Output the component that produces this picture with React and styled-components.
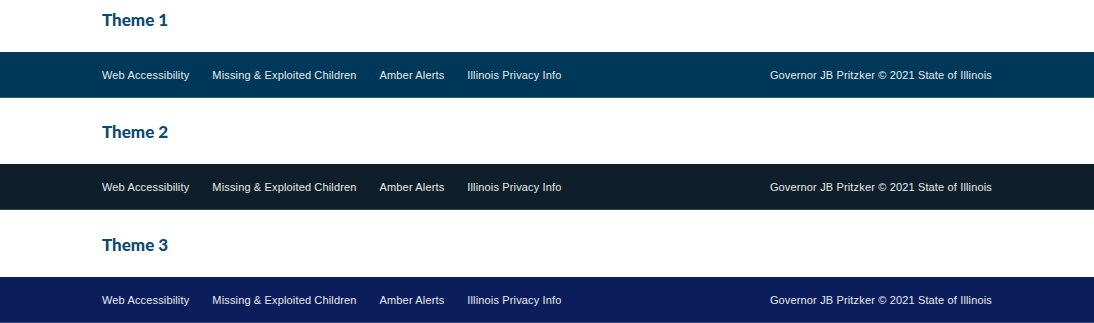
import React from 'react'
import styled, { createGlobalStyle } from 'styled-components'

const GlobalStyle = createGlobalStyle`
	body {
		margin: 0;
		background: #ffffff;
		font-family: "Liberation Sans", Arial, sans-serif;
	}
`

const themes = {
	1: { bg: '#003859', line: '#2c5d78' },
	2: { bg: '#0e1f2b', line: '#34444f' },
	3: { bg: '#0b1e5b', line: '#3b4a80' },
}

const links = [
	'Web Accessibility',
	'Missing & Exploited Children',
	'Amber Alerts',
	'Illinois Privacy Info',
]

const Section = styled.section`
	padding-top: 22px;

	&:first-child {
		padding-top: 8px;
	}

	&:last-child {
		padding-top: 23px;
	}
`

const Heading = styled.h2`
	max-width: 890px;
	margin: 0 auto 20px;
	font-family: Lato, "Noto Sans", sans-serif;
	font-size: 17px;
	line-height: 24px;
	font-weight: 900;
	color: #0b4a70;
`

const Footer = styled.footer`
	height: 45px;
	background: ${p => p.$bg};
	border-bottom: 1px solid ${p => p.$line};
`

const Inner = styled.div`
	max-width: 890px;
	height: 100%;
	margin: 0 auto;
	display: flex;
	align-items: center;
	justify-content: space-between;
`

const Links = styled.nav`
	display: flex;
	gap: 23px;
`

const FooterText = styled.a`
	font-size: 11px;
	letter-spacing: 0.15px;
	color: #e4e9ed;
	text-decoration: none;
	white-space: nowrap;
`

const ThemeFooter = ({ theme }) => (
	<Footer $bg={themes[theme].bg} $line={themes[theme].line}>
		<Inner>
			<Links>
				{links.map(l => (
					<FooterText key={l} href="#">{l}</FooterText>
				))}
			</Links>
			<FooterText as="span">Governor JB Pritzker © 2021 State of Illinois</FooterText>
		</Inner>
	</Footer>
)

export default function App() {
	return (
		<>
			<GlobalStyle />
			{[1, 2, 3].map(t => (
				<Section key={t}>
					<Heading>Theme {t}</Heading>
					<ThemeFooter theme={t} />
				</Section>
			))}
		</>
	)
}
